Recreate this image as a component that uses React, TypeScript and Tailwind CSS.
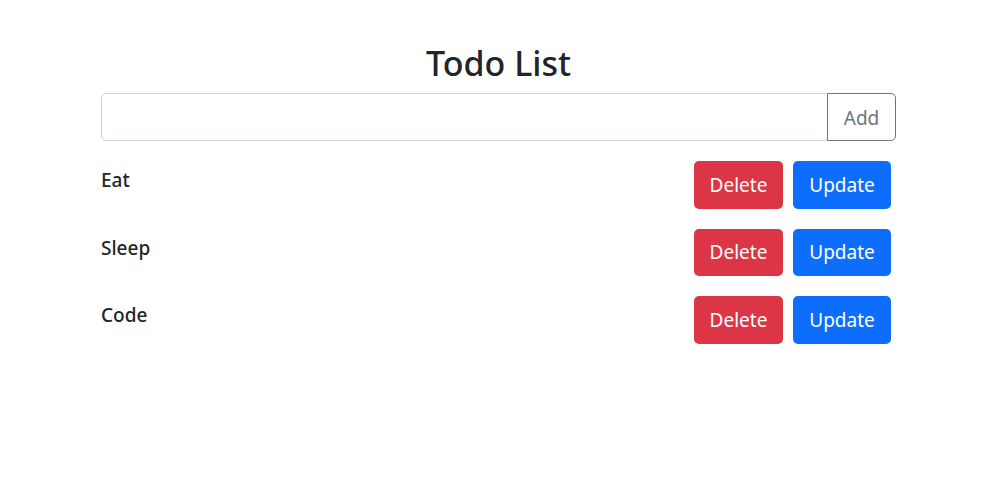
import React from "react";

const items = ["Eat", "Sleep", "Code"];

export default function App() {
  return (
    <div className="min-h-[490px] bg-white text-[#212529]" style={{ fontFamily: '"Noto Sans", "Open Sans", sans-serif' }}>
      <div className="ml-[101px] w-[795px] pt-[41px]">
        <h1 className="mb-2 text-center text-[34px] font-medium leading-[44px]">Todo List</h1>
        <div className="flex">
          <input
            className="h-12 flex-1 rounded-l-[5px] border border-[#ced4da] px-4 text-xl outline-none"
            type="text"
          />
          <button className="-ml-px h-12 w-[69px] rounded-r-[5px] border border-[#6c757d] pt-[2px] text-[19px] text-[#6c757d]">
            Add
          </button>
        </div>
        <div className="mt-5 flex flex-col gap-5">
          {items.map((item) => (
            <div key={item} className="flex items-start justify-between">
              <h5 className="pt-[7px] text-[19px] font-medium leading-[24px]">{item}</h5>
              <div className="flex">
                <button className="mx-[5px] h-[47.5px] w-[89px] rounded-[5px] bg-[#dc3545] text-[19px] text-white">Delete</button>
                <button className="mx-[5px] h-[47.5px] w-[98px] rounded-[5px] bg-[#0d6efd] text-[19px] text-white">Update</button>
              </div>
            </div>
          ))}
        </div>
      </div>
    </div>
  );
}
